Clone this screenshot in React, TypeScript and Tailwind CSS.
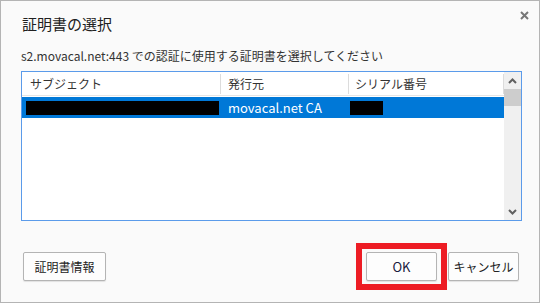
import React from 'react'

const jp = { fontFamily: '"Noto Sans CJK JP", "Noto Sans", sans-serif' }

function Chevron({ up }: { up?: boolean }){
  return (
    <svg width="9" height="6" viewBox="0 0 9 6" className={up ? '' : 'rotate-180'}>
      <path d="M1 5 L4.5 1.5 L8 5" fill="none" stroke="#606060" strokeWidth="2" />
    </svg>
  )
}

export default function App(){
  return (
    <div className="w-[542px] h-[304px] bg-white" style={jp}>
      <div className="w-[540px] h-[303px] border border-[#b4b4b4] bg-[#fafafa] flex flex-col">
        <div className="flex justify-between items-start pl-[21px] pr-[10px] pt-[13px]">
          <h1 className="text-[15px] leading-[20px] text-[#202020]">証明書の選択</h1>
          <svg width="9" height="9" viewBox="0 0 9 9" className="mt-[-3px]">
            <path d="M1 1 L8 8 M8 1 L1 8" stroke="#777" strokeWidth="2" />
          </svg>
        </div>
        <p className="pl-[20px] mt-[14px] text-[12px] leading-[16px] text-[#333]">
          s2.movacal.net:443 での認証に使用する証明書を選択してください
        </p>

        <div className="ml-[20px] mt-[7px] w-[501px] h-[150px] border border-[#5b9bea] bg-white flex">
          <div className="flex-1 flex flex-col">
            <div className="h-[24px] flex items-center border-b border-[#e5e5e5] text-[12px] text-[#333]">
              <div className="w-[199px] h-[20px] pl-[8px] flex items-center border-r border-[#dcdcdc]">サブジェクト</div>
              <div className="w-[128px] h-[20px] pl-[7px] flex items-center border-r border-[#dcdcdc]">発行元</div>
              <div className="flex-1 h-[20px] pl-[6px] flex items-center border-r border-[#dcdcdc]">シリアル番号</div>
            </div>
            <div className="mt-[1px] h-[21px] bg-[#0078d7] flex items-center text-white text-[13px]">
              <div className="w-[199px] pl-[4px]">
                <div className="w-[193px] h-[14px] bg-black" />
              </div>
              <div className="w-[128px] pl-[7px] whitespace-nowrap">movacal.net CA</div>
              <div className="pl-[1px]">
                <div className="w-[33px] h-[14px] bg-black" />
              </div>
            </div>
          </div>
          <div className="w-[17px] bg-[#f0f0f0] flex flex-col items-center">
            <div className="h-[17px] flex items-center justify-center"><Chevron up /></div>
            <div className="w-[17px] h-[17px] bg-[#cdcdcd]" />
            <div className="flex-1" />
            <div className="h-[17px] flex items-center justify-center"><Chevron /></div>
          </div>
        </div>

        <div className="mt-[31px] pl-[22px] pr-[20px] flex items-center">
          <button className="w-[83px] h-[29px] border border-[#b4b4b4] rounded-[2px] bg-[#fdfdfd] shadow-[0_1px_1px_rgba(0,0,0,0.1)] text-[12px] text-[#222]">証明書情報</button>
          <div className="flex-1" />
          <div className="relative">
            <button className="w-[71px] h-[29px] border border-[#b4b4b4] rounded-[2px] bg-[#fdfdfd] shadow-[0_1px_1px_rgba(0,0,0,0.1)] text-[13px] text-[#1a1a40]">OK</button>
            <span className="absolute -left-[10px] -right-[10px] -top-[9px] -bottom-[9px] border-[6px] border-[#ed1c24] pointer-events-none" />
          </div>
          <button className="ml-[11px] w-[71px] h-[29px] border border-[#b4b4b4] rounded-[2px] bg-[#fdfdfd] shadow-[0_1px_1px_rgba(0,0,0,0.1)] text-[12px] text-[#222]">キャンセル</button>
        </div>
      </div>
    </div>
  )
}
